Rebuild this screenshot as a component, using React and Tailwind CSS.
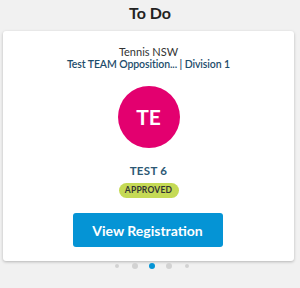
export default function App() {
  return (
    <div className="w-[300px] h-[288px] bg-[#f1f1f1] flex flex-col" style={{ fontFamily: "Lato, 'Open Sans', sans-serif" }}>
      <div className="h-[31px] flex items-center justify-center text-[16px] font-bold text-[#222] leading-none pb-[5px]">To Do</div>
      <div className="ml-[3px] w-[291px] h-[230px] bg-white rounded-[3px] shadow-[0_1px_3px_rgba(0,0,0,0.25)] flex flex-col items-center">
        <div className="mt-[14px] text-[11px] leading-[13px] text-[#333]">Tennis NSW</div>
        <div className="text-[10.5px] leading-[13px] text-[#1d4d6b] font-semibold tracking-[-0.1px]">Test TEAM Opposition... | Division 1</div>
        <div className="mt-[15px] w-[62px] h-[62px] rounded-full bg-[#e3006f] flex items-center justify-center text-white text-[21px] font-bold">TE</div>
        <div className="mt-[16px] text-[11.5px] leading-[14px] font-bold text-[#2c5874] tracking-[0.3px]">TEST 6</div>
        <div className="mt-[5px] w-[60px] h-[15px] rounded-full bg-[#c5da55] flex items-center justify-center text-[8.5px] font-bold text-[#333] tracking-[0.2px]">APPROVED</div>
        <button className="mt-[15px] mr-[2px] w-[150px] h-[34px] rounded-[3px] bg-[#0594d5] text-white text-[14px] font-bold">View Registration</button>
      </div>
      <div className="self-center flex items-center gap-[11px] h-[10px] ml-[3px]">
        <div className="mr-[2px] w-[4px] h-[4px] rounded-full bg-[#d2d2d2]" />
        <div className="w-[6px] h-[6px] rounded-full bg-[#d2d2d2]" />
        <div className="w-[6px] h-[6px] rounded-full bg-[#0594d5]" />
        <div className="w-[6px] h-[6px] rounded-full bg-[#d2d2d2]" />
        <div className="ml-[2px] w-[4px] h-[4px] rounded-full bg-[#d2d2d2]" />
      </div>
    </div>
  );
}
